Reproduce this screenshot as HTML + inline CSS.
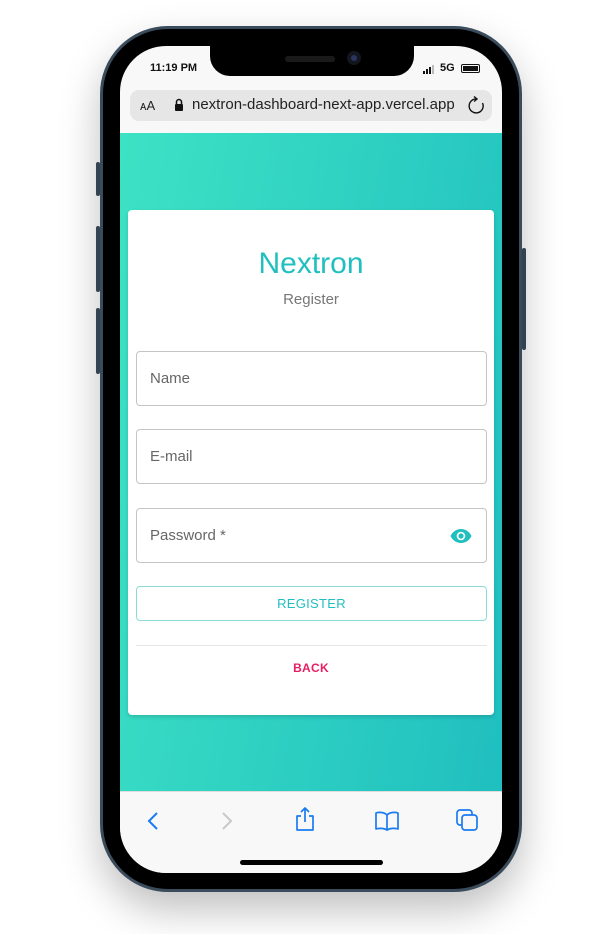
<!DOCTYPE html>
<html><head><meta charset="utf-8"><style>
*{margin:0;padding:0;box-sizing:border-box}
body{width:616px;height:934px;background:#fff;position:relative;overflow:hidden;font-family:"Liberation Sans",sans-serif}
.phone{position:absolute;left:100px;top:26px;width:422px;height:866px;border-radius:68px;background:#000;border:3px solid #3a4c5c;box-shadow:0 18px 40px rgba(0,0,0,.25)}
.btn{position:absolute;background:#3a4c5c;width:4px;border-radius:2px}
.screen{position:absolute;left:120px;top:46px;width:382px;height:827px;border-radius:46px;overflow:hidden;background:#f8f8f8}
.notch{position:absolute;left:210px;top:46px;width:204px;height:30px;background:#000;border-radius:0 0 20px 20px}
.grad{position:absolute;left:0;top:87px;width:382px;height:658px;background:linear-gradient(100deg,#3de2c4,#20bfc0)}
.url{position:absolute;left:10px;top:44px;width:362px;height:31px;background:#e6e6e6;border-radius:9px;font-size:15px;color:#222}
.card{position:absolute;left:8px;top:77px;width:366px;height:505px;background:#fff;border-radius:4px;box-shadow:0 2px 4px rgba(0,0,0,.15)}
.f{position:absolute;left:8px;width:351px;height:55px;border:1px solid #c4c4c4;border-radius:4px;font-size:15px;color:#666;padding:18px 13px}
.bot{position:absolute;left:0;top:745px;width:382px;height:82px;background:#f8f8f8;border-top:1px solid #ddd}
</style></head><body>
<div class="btn" style="left:96px;top:162px;height:34px"></div>
<div class="btn" style="left:96px;top:226px;height:66px"></div>
<div class="btn" style="left:96px;top:308px;height:66px"></div>
<div class="btn" style="left:522px;top:248px;height:102px"></div>
<div class="phone"></div>
<div class="screen">
 <div style="position:absolute;left:30px;top:16px;font-size:11px;font-weight:bold;color:#111">11:19 PM</div>
 <div style="position:absolute;left:303px;top:16px;font-size:11px;font-weight:bold;color:#111;display:flex;align-items:flex-end;gap:3px">
  <span style="display:inline-block;width:2px;height:3px;background:#111"></span><span style="display:inline-block;width:2px;height:5px;background:#111;margin-left:-2px"></span><span style="display:inline-block;width:2px;height:7px;background:#111;margin-left:-2px"></span><span style="display:inline-block;width:2px;height:9px;background:#bbb;margin-left:-2px"></span>
  <span style="margin-left:3px">5G</span>
  <span style="display:inline-block;width:19px;height:9px;border:1px solid #111;border-radius:2px;padding:1px;margin-left:3px;margin-bottom:1px"><span style="display:block;width:100%;height:100%;background:#111"></span></span>
 </div>
 <div class="url">
  <span style="position:absolute;left:10px;top:8px;font-size:13px">ᴀA</span>
  <svg style="position:absolute;left:44px;top:8px" width="10" height="13" viewBox="0 0 10 13"><path d="M2.5 6V4a2.5 2.5 0 015 0v2" fill="none" stroke="#111" stroke-width="1.5"/><rect x="1" y="6" width="8" height="7" rx="1" fill="#111"/></svg>
  <span style="position:absolute;left:62px;top:6px">nextron-dashboard-next-app.vercel.app</span>
  <svg style="position:absolute;left:337px;top:6px" width="18" height="19" viewBox="0 0 18 19"><path d="M10 3A7 7 0 1 0 15.5 7" fill="none" stroke="#111" stroke-width="1.4"/><path d="M7 0.5L10 3 7 5.5" fill="none" stroke="#111" stroke-width="1.4"/></svg>
 </div>
 <div class="grad">
  <div class="card">
   <div style="position:absolute;width:100%;top:37px;text-align:center;font-size:30px;color:#20bfc0">Nextron</div>
   <div style="position:absolute;width:100%;top:81px;text-align:center;font-size:15px;color:#777">Register</div>
   <div class="f" style="top:141px">Name</div>
   <div class="f" style="top:219px">E-mail</div>
   <div class="f" style="top:298px">Password *
    <svg style="position:absolute;right:14px;top:19px" width="22" height="16" viewBox="0 0 22 16"><path d="M11 1C6 1 2 4.5 0.5 8 2 11.5 6 15 11 15s9-3.5 10.5-7C20 4.5 16 1 11 1z" fill="#20bfc0"/><circle cx="11" cy="8" r="4.3" fill="#fff"/><circle cx="11" cy="8" r="2.6" fill="#20bfc0"/></svg>
   </div>
   <div style="position:absolute;left:8px;top:376px;width:351px;height:35px;border:1px solid #8adcd8;border-radius:4px;text-align:center;line-height:33px;font-size:13px;color:#20bfc0;letter-spacing:.3px">REGISTER</div>
   <div style="position:absolute;left:8px;top:435px;width:351px;border-top:1px solid #e6e6e6"></div>
   <div style="position:absolute;width:100%;top:451px;text-align:center;font-size:12px;font-weight:bold;color:#e91e63;letter-spacing:.3px">BACK</div>
  </div>
 </div>
 <div class="bot">
  <svg style="position:absolute;left:26px;top:19px" width="14" height="20" viewBox="0 0 14 20"><path d="M11 2L3 10l8 8" fill="none" stroke="#1a7bf2" stroke-width="2"/></svg>
  <svg style="position:absolute;left:100px;top:19px" width="14" height="20" viewBox="0 0 14 20"><path d="M3 2l8 8-8 8" fill="none" stroke="#c8c8c8" stroke-width="2"/></svg>
  <svg style="position:absolute;left:174px;top:14px" width="22" height="26" viewBox="0 0 22 26"><path d="M7 10H3v14h16V10h-4M11 16V2M7 6l4-4 4 4" fill="none" stroke="#1a7bf2" stroke-width="1.7" stroke-linejoin="round"/></svg>
  <svg style="position:absolute;left:254px;top:18px" width="26" height="22" viewBox="0 0 26 22"><path d="M13 5C10 2 5 2 2 3v16c3-1 8-1 11 1 3-2 8-2 11-1V3c-3-1-8-1-11 2zM13 5v15" fill="none" stroke="#1a7bf2" stroke-width="1.7" stroke-linejoin="round"/></svg>
  <svg style="position:absolute;left:335px;top:16px" width="24" height="24" viewBox="0 0 24 24"><rect x="2" y="2" width="15" height="15" rx="3" fill="none" stroke="#1a7bf2" stroke-width="1.7"/><rect x="7" y="7" width="15" height="15" rx="3" fill="#f8f8f8" stroke="#1a7bf2" stroke-width="1.7"/></svg>
  <div style="position:absolute;left:120px;top:68px;width:143px;height:5px;background:#000;border-radius:3px"></div>
 </div>
</div>
<div class="notch"></div>
<div style="position:absolute;left:285px;top:56px;width:50px;height:6px;background:#1a1a1a;border-radius:3px"></div>
<div style="position:absolute;left:347px;top:51px;width:14px;height:14px;background:#14161e;border-radius:50%"><div style="margin:4px;width:6px;height:6px;border-radius:50%;background:#2a3560"></div></div>
</body></html>
